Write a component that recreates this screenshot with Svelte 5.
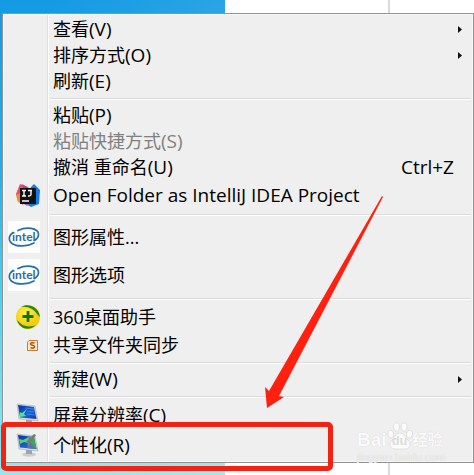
<script>
  const groups = [
    [
      { label: '查看', key: '(V)', submenu: true },
      { label: '排序方式', key: '(O)', submenu: true },
      { label: '刷新', key: '(E)' },
    ],
    [
      { label: '粘贴', key: '(P)' },
      { label: '粘贴快捷方式', key: '(S)', disabled: true },
      { label: '撤消 重命名', key: '(U)', shortcut: 'Ctrl+Z' },
      { key: 'Open Folder as IntelliJ IDEA Project', icon: 'idea', size: 'medium' },
    ],
    [
      { label: '图形属性...', icon: 'intel', size: 'large' },
      { label: '图形选项', icon: 'intel', size: 'large' },
    ],
    [
      { label: '360桌面助手', icon: 'helper', size: 'medium' },
      { label: '共享文件夹同步', icon: 'sync' },
    ],
    [{ label: '新建', key: '(W)', submenu: true }],
    [
      { label: '屏幕分辨率', key: '(C)', icon: 'display', size: 'medium' },
      { label: '个性化', key: '(R)', icon: 'personalize', size: 'medium' },
    ],
  ];
</script>

{#snippet glyph(name)}
  {#if name === 'idea'}
    <svg width="24" height="24" viewBox="0 0 24 24" aria-hidden="true">
      <path d="M4 1 12 4 7 22 2 18 0 11Z" fill="#ee4b6c" />
      <path d="M0 12 5 10 7 21 2 19Z" fill="#f58a3c" />
      <path d="M15 4 18 1 24 7 23 21 15 24 8 20Z" fill="#147ce8" />
      <path d="M6 1 13 5 8 8Z" fill="#c23f91" />
      <path d="M5 19h10l-4 4Z" fill="#b15bb4" />
      <rect x="4" y="5" width="16" height="16" fill="#111" />
      <path d="M6 7.500h4M8 7.500v5.500M6 13h4M12 7.500h4M15 7.500v4q0 1.700-3 1.500M6 18h7" fill="none" stroke="#fff" stroke-width="1.400" />
    </svg>
  {:else if name === 'intel'}
    <svg class="intel" width="32" height="32" viewBox="0 0 32 32" aria-hidden="true">
      <path d="M10 9.500C18 5.500 30 6.500 30.500 13c.2 3-1.500 5-4 6.500M5 11.500C0 15 .5 20 4 22.500c5 3.500 16 3 22-.5" fill="none" stroke="#286eac" stroke-width="1.700" stroke-linecap="round" />
      <text x="4" y="20" font-size="12" font-weight="700" fill="#286eac">intel</text>
    </svg>
  {:else if name === 'helper'}
    <svg width="24" height="24" viewBox="0 0 24 24" aria-hidden="true">
      <defs>
        <radialGradient id="ball" cx=".4" cy=".35"><stop offset="0" stop-color="#fff34a" /><stop offset="1" stop-color="#f4cc10" /></radialGradient>
      </defs>
      <circle cx="12" cy="12" r="12" fill="url(#ball)" />
      <path d="M5 2C11-2 20 1 23 8l1 4-3-3C18 4 12 1 5 2ZM1 15l2 2c3 4 10 6 17 3-6 6-16 5-19-5Z" fill="#24860d" />
      <path d="M12 6v11M6.500 11.500h11" stroke="#14700b" stroke-width="2.800" />
    </svg>
  {:else if name === 'sync'}
    <svg class="small" width="11" height="11" viewBox="0 0 11 11" aria-hidden="true">
      <path d="M2 .5h8.500v10H.5V2Z" fill="#fbe8c8" stroke="#c97a35" />
      <path d="M7.500 3Q3.500 2 3.500 4q0 1 2 1.300t2 1.500q0 2-4 1" fill="none" stroke="#b8520f" stroke-width="1.500" />
    </svg>
  {:else}
    <svg width="24" height="24" viewBox="0 0 24 24" aria-hidden="true">
      <defs>
        <linearGradient id="screen" x2="1" y2="1"><stop offset="0" stop-color="#102fa0" /><stop offset=".6" stop-color="#1f5fd6" /><stop offset="1" stop-color="#0e3c96" /></linearGradient>
      </defs>
      <ellipse cx="13" cy="21.500" rx="7" ry="2.200" fill="#c9cdd0" />
      <path d="M10 17h6v4h-6Z" fill="#9da5a9" />
      <path d="M1 1 19 3 22 18 3 16Z" fill="#d5dadd" stroke="#a2abb3" stroke-width=".6" />
      <path d="M2 2 18 4 20.500 16 4 14.500Z" fill="url(#screen)" />
      {#if name === 'personalize'}
        <path d="M11 4 18 4 20.500 16 12 15Z" fill="#39ad52" />
        <path d="m3 6 4 1 4-2 4 1-3 4-4-1-4 2Z" fill="#4cd672" />
        <path d="m10 9 8-8 2 1-6 9Z" fill="#777b70" />
        <path d="M10 15l5-5 5 5.500Z" fill="#6b62cf" />
      {:else}
        <path d="M9 5 18 6M11 8l7 1M11 11l8 1" stroke="#2f86ea" />
        <path d="m4 14 0-5 2 1 5-4-3 5 2 2Z" fill="#4ae599" />
      {/if}
    </svg>
  {/if}
{/snippet}

<main class="desktop">
  <div class="menu" role="menu">
    {#each groups as group}
      <div class="group" role="group">
        {#each group as item}
          <button class={['item', item.size]} role="menuitem" disabled={item.disabled} aria-haspopup={item.submenu ? 'menu' : undefined}>
            <span class="icon">{#if item.icon}{@render glyph(item.icon)}{/if}</span>
            <span class="label">{item.label ?? ''}<span class="roman">{item.key ?? ''}</span></span>
            {#if item.shortcut}<span class="shortcut roman">{item.shortcut}</span>{/if}
            {#if item.submenu}
              <svg class="more" width="4" height="7" viewBox="0 0 4 7" aria-hidden="true"><path d="M0 0 4 3.500 0 7Z" fill="#111" /></svg>
            {/if}
          </button>
        {/each}
      </div>
    {/each}
  </div>

  <div class="watermark">
    <div class="brand">
      <span class="bai">Bai</span>
      <span class="paw">
        <svg width="26" height="28" viewBox="0 0 26 28" aria-hidden="true">
          <g fill="#fafafa" stroke="#dcdcdc" stroke-width=".8">
            <ellipse cx="3.800" cy="12" rx="3" ry="4" transform="rotate(-15 3.800 12)" />
            <ellipse cx="9.500" cy="5" rx="3" ry="4.200" />
            <ellipse cx="17" cy="5" rx="3" ry="4.200" transform="rotate(12 17 5)" />
            <ellipse cx="22.500" cy="12" rx="3" ry="4" transform="rotate(15 22.500 12)" />
            <path d="M13 11c4 0 5 4 8 7s3 8-2 9H7c-5-1-5-6-2-9s4-7 8-7Z" />
          </g>
        </svg>
        <span class="du">du</span>
      </span>
      <span class="hanzi">经验</span>
    </div>
    <div class="site">jingyan.baidu.com</div>
  </div>

  <div class="highlight"></div>
  <svg class="arrow" width="118" height="212" viewBox="0 0 118 212" aria-hidden="true">
    <path d="M117 0 118 1 14 200 19 201 2 212 0 191 4 195Z" fill="#ff2010" />
  </svg>
</main>

<style>
  .desktop {
    position: relative;
    box-sizing: border-box;
    min-height: 100vh;
    padding: 13px 0 12px 2px;
    background:
      linear-gradient(#dadada, #dadada) 388px 0 / 2px 100% no-repeat,
      linear-gradient(90deg, transparent 20%, #ffffff18) 0 0 / 225px 100% no-repeat,
      linear-gradient(#149ae2, #20b0e8 35%, #55d2ef 65%, #92e8f1) 0 0 / 225px 100% no-repeat,
      #fff;
    font-family: 'Open Sans', 'Noto Sans CJK SC', sans-serif;
  }
  .menu {
    padding: 2px 1px;
    border: 1px solid #929292;
    background:
      linear-gradient(90deg, #e0e0e0 50%, #fff 50%) 44px 0 / 2px 100% no-repeat,
      #efefef;
    box-shadow: inset 0 0 0 1px #f7f7f7;
  }
  .group + .group {
    display: flow-root;
  }
  .group + .group::before {
    content: '';
    display: block;
    height: 1px;
    margin: 4px 1px 2px 46px;
    border-top: 1px solid #dcdcdc;
    background: #fff;
  }
  .item {
    display: flex;
    align-items: center;
    width: 100%;
    height: 26px;
    padding: 0 18px 0 4px;
    border: 0;
    background: none;
    color: #000;
    font: inherit;
    font-size: 18px;
    line-height: 24px;
    text-align: left;
    white-space: nowrap;
  }
  .item:disabled {
    color: #808080;
  }
  .item.medium {
    height: 30px;
  }
  .item.large {
    height: 38px;
  }
  .icon {
    display: flex;
    justify-content: flex-end;
    width: 32px;
    margin-right: 13px;
  }
  .label,
  .shortcut {
    height: 24px;
  }
  .label {
    flex: 1;
  }
  .roman {
    font-size: 19px;
  }
  .more {
    margin-right: -8px;
  }
  .intel {
    background: #fff;
    font-family: Lato, sans-serif;
  }
  .small {
    margin-right: 2px;
  }
  .watermark {
    position: absolute;
    left: 357px;
    top: 421px;
    color: #fafafa;
    text-shadow: 0 0 1px #ccc;
    pointer-events: none;
  }
  .brand {
    display: flex;
    align-items: flex-end;
    height: 30px;
  }
  .bai {
    font: 700 19px/22px 'Liberation Sans', sans-serif;
  }
  .paw {
    position: relative;
    height: 29px;
  }
  .du {
    position: absolute;
    inset: 12px 0 0;
    color: #dcdcdc;
    font: 700 13px/14px 'Liberation Sans', sans-serif;
    text-align: center;
    text-shadow: none;
  }
  .hanzi {
    font: 700 15px/24px 'Noto Sans CJK SC', sans-serif;
  }
  .site {
    color: #efefef;
    font: 11px/12px 'Liberation Sans', sans-serif;
  }
  .highlight {
    position: absolute;
    left: 1px;
    top: 422px;
    box-sizing: border-box;
    width: 332px;
    height: 49px;
    border: 5px solid #f22314;
    border-radius: 5px;
    pointer-events: none;
  }
  .arrow {
    position: absolute;
    left: 265px;
    top: 196px;
    pointer-events: none;
  }
</style>
